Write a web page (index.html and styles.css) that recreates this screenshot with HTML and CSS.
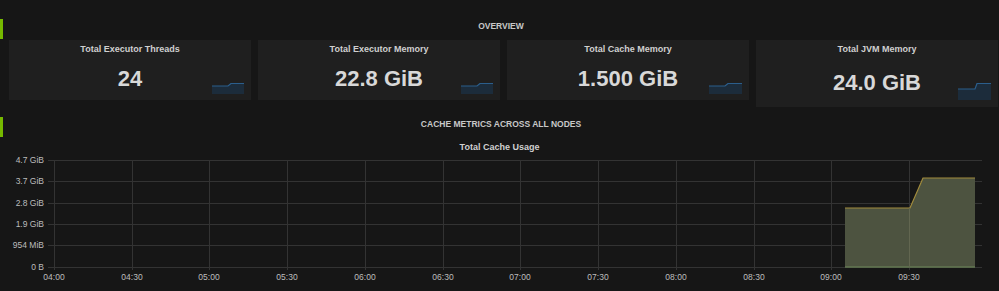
FILE: index.html
```html
<!DOCTYPE html>
<html lang="en">
<head>
    <meta charset="UTF-8">
    <meta name="viewport" content="width=device-width, initial-scale=1.0">
    <title>Cache Dashboard</title>
    <link rel="stylesheet" href="styles.css">
</head>
<body>
    <div class="dashboard">
        <div class="row-head">
            <span class="marker"></span>
            <span class="row-title">OVERVIEW</span>
        </div>
        <div class="stats">
            <div class="stat">
                <div class="stat-title">Total Executor Threads</div>
                <div class="stat-value">24</div>
                <svg class="spark" width="32" height="11" viewBox="0 0 32 11">
                    <polygon points="0,3 16,3 19,0.5 32,0.5 32,11 0,11" fill="#1c2c3b"/>
                    <polyline points="0,3 16,3 19,0.5 32,0.5" fill="none" stroke="#2b5e8c" stroke-width="1.2"/>
                </svg>
            </div>
            <div class="stat">
                <div class="stat-title">Total Executor Memory</div>
                <div class="stat-value">22.8 GiB</div>
                <svg class="spark" width="32" height="11" viewBox="0 0 32 11">
                    <polygon points="0,3 16,3 19,0.5 32,0.5 32,11 0,11" fill="#1c2c3b"/>
                    <polyline points="0,3 16,3 19,0.5 32,0.5" fill="none" stroke="#2b5e8c" stroke-width="1.2"/>
                </svg>
            </div>
            <div class="stat">
                <div class="stat-title">Total Cache Memory</div>
                <div class="stat-value">1.500 GiB</div>
                <svg class="spark" width="33" height="11" viewBox="0 0 33 11">
                    <polygon points="0,3 16,3 19,0.5 33,0.5 33,11 0,11" fill="#1c2c3b"/>
                    <polyline points="0,3 16,3 19,0.5 33,0.5" fill="none" stroke="#2b5e8c" stroke-width="1.2"/>
                </svg>
            </div>
            <div class="stat stat-tall">
                <div class="stat-title">Total JVM Memory</div>
                <div class="stat-value">24.0 GiB</div>
                <svg class="spark" width="33" height="17" viewBox="0 0 33 17">
                    <polygon points="0,6 17,6 19,0.5 33,0.5 33,17 0,17" fill="#1c2c3b"/>
                    <polyline points="0,6 17,6 19,0.5 33,0.5" fill="none" stroke="#2b5e8c" stroke-width="1.2"/>
                </svg>
            </div>
        </div>

        <div class="row-head row-gap">
            <span class="marker"></span>
            <span class="row-title">CACHE METRICS ACROSS ALL NODES</span>
        </div>
        <div class="graph">
            <div class="graph-title">Total Cache Usage</div>
            <svg class="chart" width="999" height="138" viewBox="0 0 999 138">
                <!-- horizontal grid -->
                <g stroke="#333" stroke-width="1">
                    <line x1="48" y1="7.5" x2="982" y2="7.5"/>
                    <line x1="48" y1="28.5" x2="982" y2="28.5"/>
                    <line x1="48" y1="50.5" x2="982" y2="50.5"/>
                    <line x1="48" y1="71.5" x2="982" y2="71.5"/>
                    <line x1="48" y1="92.5" x2="982" y2="92.5"/>
                    <line x1="48" y1="114.5" x2="982" y2="114.5"/>
                </g>
                <!-- vertical grid -->
                <g stroke="#333" stroke-width="1">
                    <line x1="54.5" y1="7.5" x2="54.5" y2="117"/>
                    <line x1="132.5" y1="7.5" x2="132.5" y2="117"/>
                    <line x1="209.5" y1="7.5" x2="209.5" y2="117"/>
                    <line x1="287.5" y1="7.5" x2="287.5" y2="117"/>
                    <line x1="365.5" y1="7.5" x2="365.5" y2="117"/>
                    <line x1="443.5" y1="7.5" x2="443.5" y2="117"/>
                    <line x1="520.5" y1="7.5" x2="520.5" y2="117"/>
                    <line x1="598.5" y1="7.5" x2="598.5" y2="117"/>
                    <line x1="676.5" y1="7.5" x2="676.5" y2="117"/>
                    <line x1="754.5" y1="7.5" x2="754.5" y2="117"/>
                    <line x1="831.5" y1="7.5" x2="831.5" y2="117"/>
                    <line x1="909.5" y1="7.5" x2="909.5" y2="117"/>
                </g>
                <!-- series -->
                <polygon points="845,114.5 845,55 910,55 923,25 975,25 975,114.5" fill="#4d5340"/>
                <polyline points="845,55 910,55 923,25 975,25" fill="none" stroke="#a28c3c" stroke-width="1.2"/>
                <line x1="845" y1="114" x2="975" y2="114" stroke="#6f8a5a" stroke-width="1"/>
                <line x1="909.5" y1="55" x2="909.5" y2="114" stroke="#626650" stroke-width="1"/>
                <!-- y axis -->
                <g class="axis-label" text-anchor="end">
                    <text x="44" y="7.5">4.7 GiB</text>
                    <text x="44" y="28.5">3.7 GiB</text>
                    <text x="44" y="50.5">2.8 GiB</text>
                    <text x="44" y="71.5">1.9 GiB</text>
                    <text x="44" y="92.5">954 MiB</text>
                    <text x="44" y="114.5">0 B</text>
                </g>
                <!-- x axis -->
                <g class="axis-label" text-anchor="middle">
                    <text x="54" y="124.5">04:00</text>
                    <text x="132" y="124.5">04:30</text>
                    <text x="209" y="124.5">05:00</text>
                    <text x="287" y="124.5">05:30</text>
                    <text x="365" y="124.5">06:00</text>
                    <text x="443" y="124.5">06:30</text>
                    <text x="520" y="124.5">07:00</text>
                    <text x="598" y="124.5">07:30</text>
                    <text x="676" y="124.5">08:00</text>
                    <text x="754" y="124.5">08:30</text>
                    <text x="831" y="124.5">09:00</text>
                    <text x="909" y="124.5">09:30</text>
                </g>
            </svg>
        </div>
    </div>
</body>
</html>
```

FILE: styles.css
```css
body {
    margin: 0;
    background-color: #161616;
    font-family: "Liberation Sans", Arial, sans-serif;
    color: #d8d8d8;
    overflow: hidden;
}
.dashboard {
    padding-top: 19px;
}
.row-head {
    display: flex;
    align-items: flex-start;
    height: 21px;
}
.row-gap {
    margin-top: 10px;
}
.marker {
    width: 3px;
    height: 20px;
    background-color: #76b900;
}
.row-title {
    flex: 1;
    text-align: center;
    font-size: 8.5px;
    font-weight: bold;
    line-height: 14px;
    color: #c8c8c8;
}
.stats {
    display: flex;
    align-items: flex-start;
    gap: 7px;
    padding: 0 1px 0 9px;
}
.stat {
    position: relative;
    flex: 1;
    height: 60px;
    background-color: #1f1f1f;
    text-align: center;
}
.stat-tall {
    height: 67px;
}
.stat-title {
    padding-top: 3px;
    font-size: 9px;
    font-weight: bold;
    line-height: 12px;
    color: #d0d0d0;
}
.stat-value {
    margin-top: 11px;
    font-size: 22px;
    font-weight: bold;
    line-height: 26px;
    color: #d8d8d8;
}
.stat-tall .stat-value {
    margin-top: 15px;
}
.spark {
    position: absolute;
    right: 7px;
    bottom: 6px;
    display: block;
}
.stat-tall .spark {
    bottom: 7px;
}
.graph-title {
    padding-top: 3px;
    text-align: center;
    font-size: 9px;
    font-weight: bold;
    line-height: 12px;
    color: #d0d0d0;
}
.chart {
    display: block;
}
.axis-label text {
    font-family: "Liberation Sans", Arial, sans-serif;
    font-size: 8.5px;
    fill: #bdbdbd;
    dominant-baseline: middle;
}
```
